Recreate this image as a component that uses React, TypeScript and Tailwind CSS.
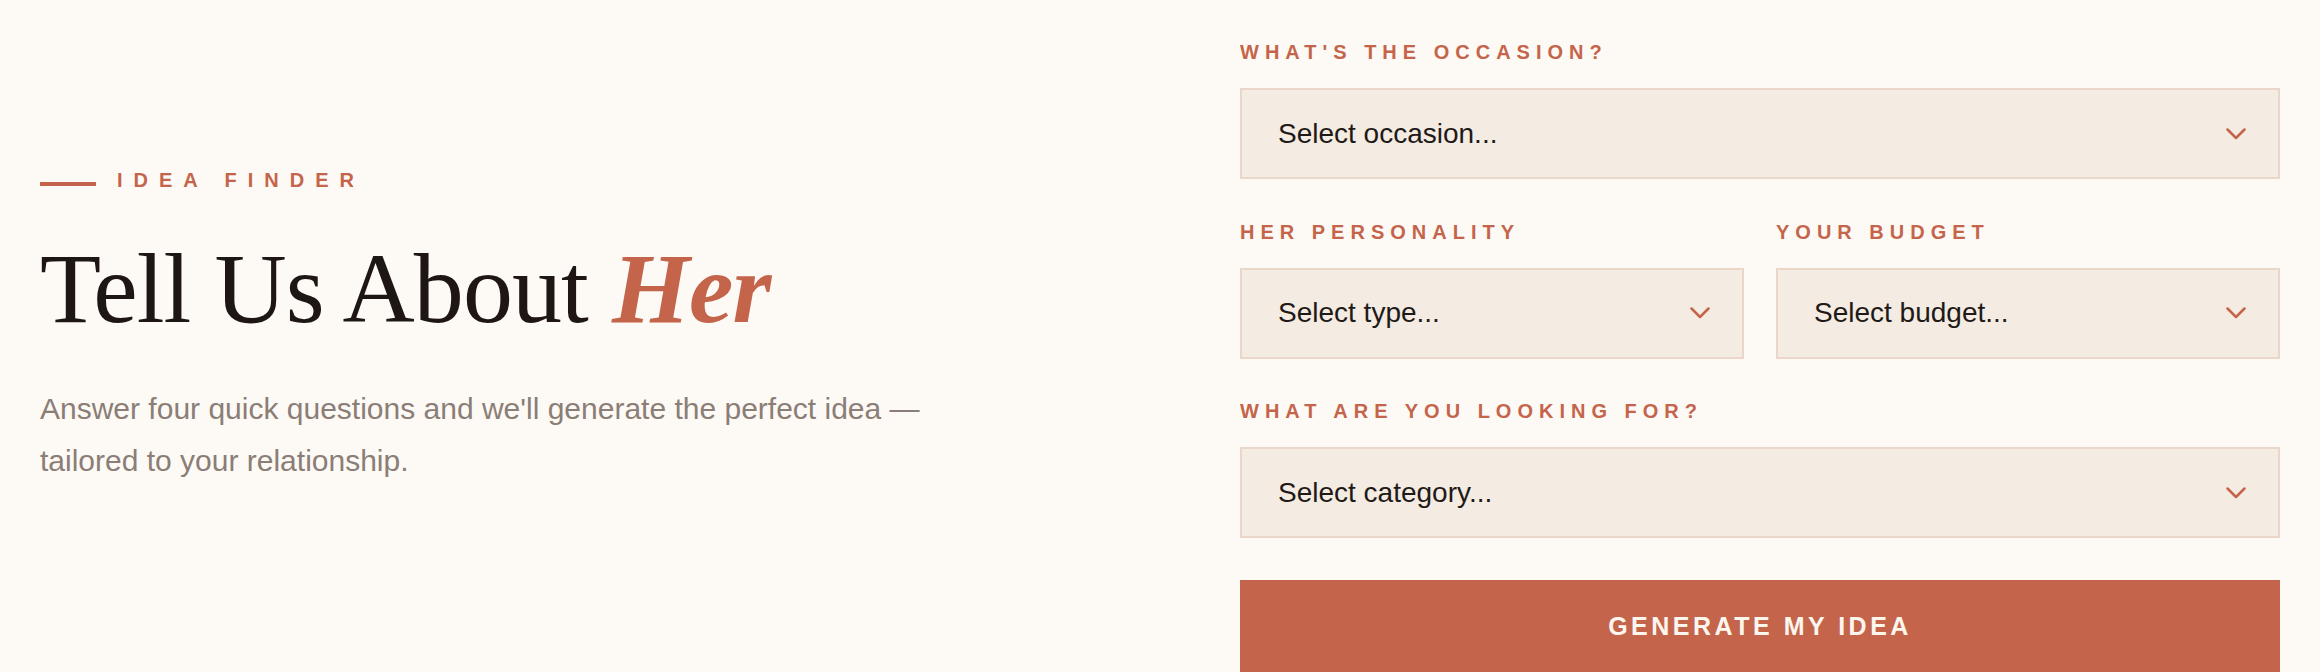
import React from "react";

type Field = { label: string; placeholder: string };

const sans = "font-['Liberation_Sans',Arial,sans-serif]";

function Chevron() {
  return (
    <svg width="20" height="12" viewBox="0 0 20 12" fill="none" className="shrink-0">
      <path d="M1.5 1.5 10 10l8.5-8.5" stroke="#c4654b" strokeWidth="2.5" strokeLinecap="round" strokeLinejoin="round" />
    </svg>
  );
}

function SelectBox({ placeholder }: { placeholder: string }) {
  return (
    <div className="flex h-[91px] items-center justify-between border-2 border-[#ebd7c9] bg-[#f4ebe2] pl-[36px] pr-[32px]">
      <span className={`${sans} text-[28px] text-[#1f1a17]`}>{placeholder}</span>
      <Chevron />
    </div>
  );
}

function Group({ label, placeholder }: Field) {
  return (
    <div>
      <label className={`${sans} mb-[24px] block text-[20px] font-bold uppercase leading-[23px] tracking-[0.3em] text-[#c4654b]`}>
        {label}
      </label>
      <SelectBox placeholder={placeholder} />
    </div>
  );
}

export default function App() {
  return (
    <main className="h-[672px] overflow-hidden bg-[#fdf9f5]">
      <div className="grid grid-cols-2 gap-[160px] px-[40px]">
        {/* Intro */}
        <section className="pt-[169px]">
          <div className="flex items-center gap-[21px]">
            <span className="mt-[7px] block h-[4px] w-[56px] bg-[#c4654b]" />
            <span className={`${sans} text-[20px] font-bold uppercase leading-[23px] tracking-[0.55em] text-[#c4654b]`}>
              Idea Finder
            </span>
          </div>
          <h1 className="mt-[47px] font-['Liberation_Serif','Times_New_Roman',serif] text-[100px] leading-[100px] tracking-[-0.009em] text-[#1e1614]">
            Tell Us About <em className="font-bold text-[#c4654b]">Her</em>
          </h1>
          <p className={`${sans} mt-[44px] max-w-[960px] text-[30px] leading-[52px] text-[#8a7e76]`}>
            Answer four quick questions and we'll generate the perfect idea — tailored to your relationship.
          </p>
        </section>

        {/* Form */}
        <form className="flex flex-col gap-[41.5px] pt-[41px]">
          <Group label="What's the occasion?" placeholder="Select occasion..." />
          <div className="grid grid-cols-2 gap-[32px]">
            <Group label="Her personality" placeholder="Select type..." />
            <Group label="Your budget" placeholder="Select budget..." />
          </div>
          <Group label="What are you looking for?" placeholder="Select category..." />
          <button
            type="button"
            className={`${sans} h-[94px] shrink-0 bg-[#c4654b] text-[25px] font-bold uppercase tracking-[0.14em] text-[#fdf6ef]`}
          >
            Generate My Idea
          </button>
        </form>
      </div>
    </main>
  );
}
